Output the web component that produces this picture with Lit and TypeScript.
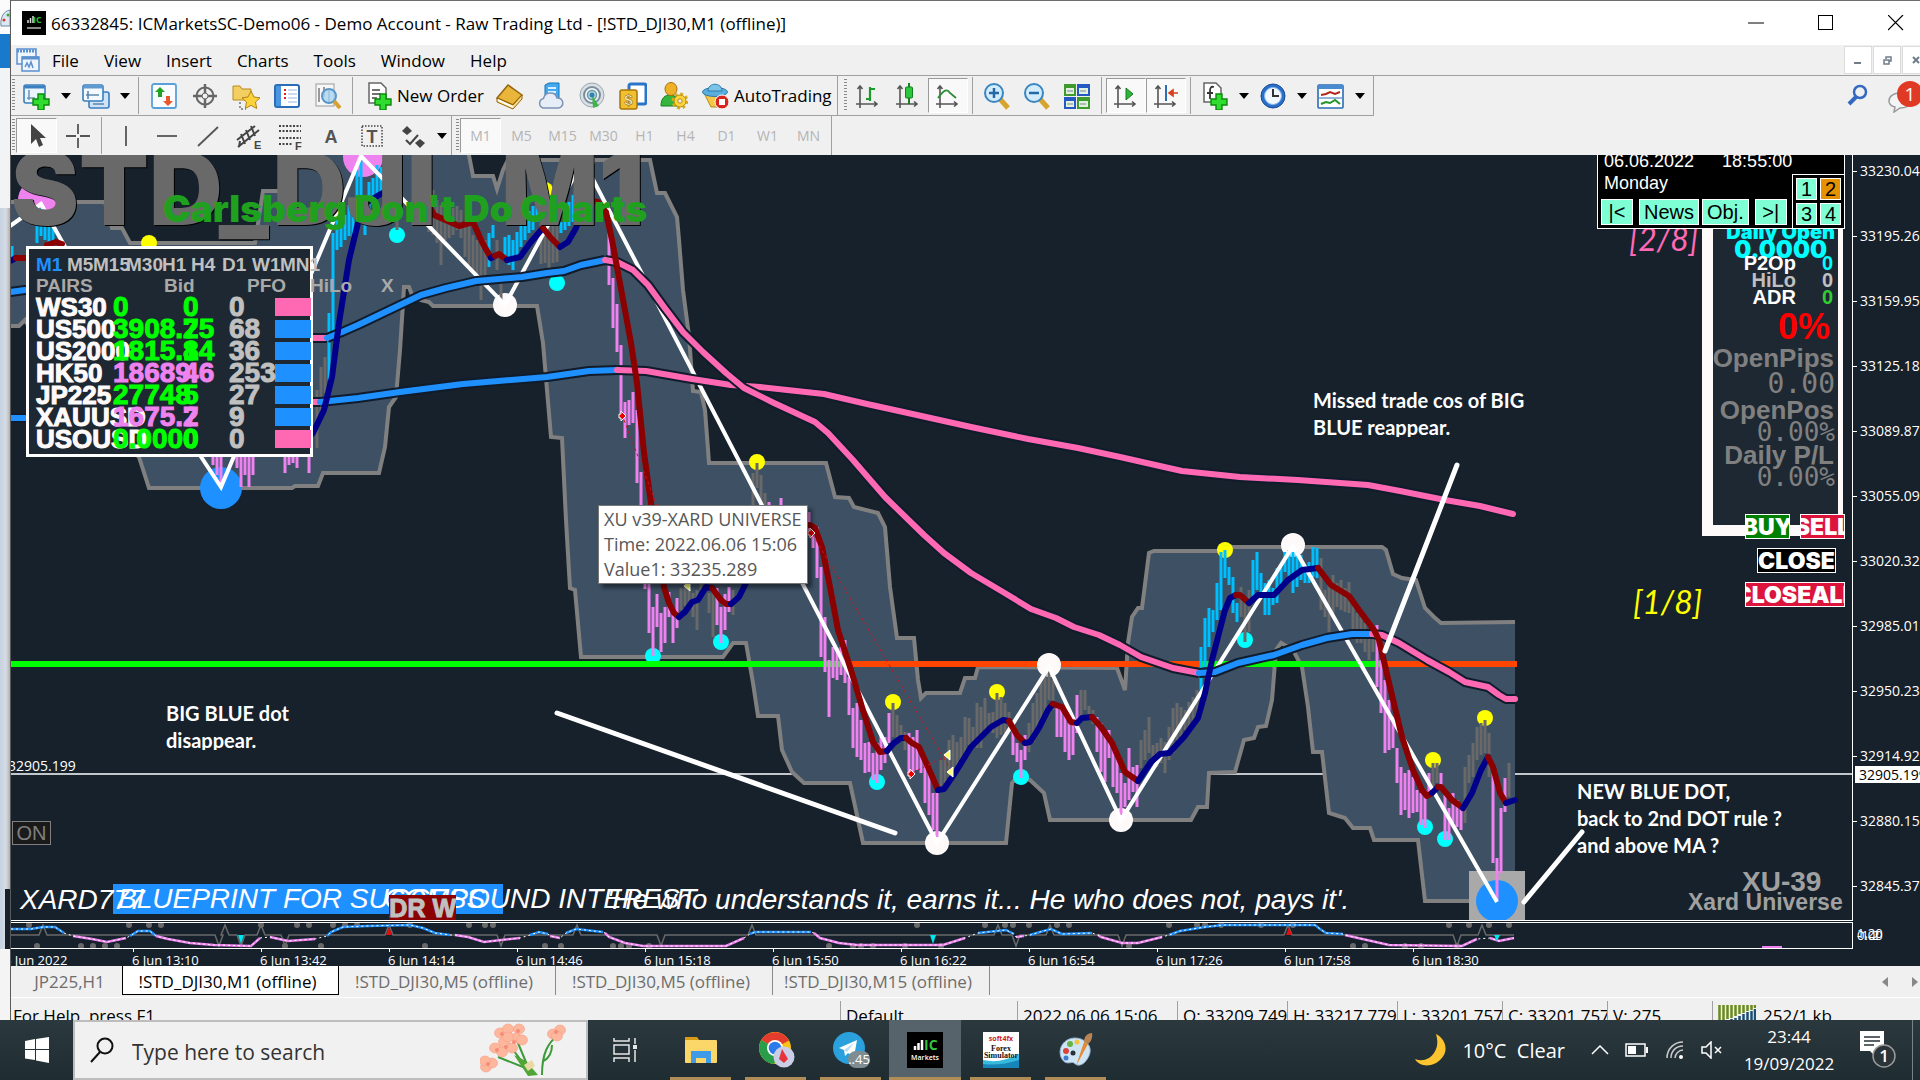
import { LitElement, html, svg, css } from "lit";
import { customElement } from "lit/decorators.js";

type Tone = "v" | "g" | "b";
type Bar = [number, number, Tone?];

const TONES: Record<Tone, string> = { v: "#ee82ee", g: "#696969", b: "#00bfff" };

/* Price bars: first x, then [high, low, tone] every 4 units; tone carries over when omitted. */
const RUNS: Array<[number, Bar[]]> = [
  [12, [[246, 260, "b"]]],
  [37, [[210, 243, "b"], [208, 236], [212, 240], [215, 242], [214, 246]]],
  [213, [[440, 465, "v"], [440, 475], [440, 487]]],
  [237, [[440, 468, "v"], [440, 487], [440, 475], [440, 487], [440, 475]]],
  [285, [[440, 473, "v"], [440, 465], [440, 463], [440, 468]]],
  [309, [[440, 473, "v"]]],
  [317, [[390, 448, "g"], [367, 417], [357, 393], [313, 380, "b"], [233, 340], [220, 250], [228, 247], [215, 240], [205, 236], [200, 237], [170, 230], [157, 223], [195, 235], [182, 222], [178, 205], [165, 197], [167, 197], [160, 198], [155, 220], [155, 213], [190, 230, "g"]]],
  [421, [[177, 200, "g"], [180, 203], [185, 232], [190, 235], [200, 243], [205, 265], [210, 240], [212, 238], [208, 235], [206, 230], [210, 238], [227, 257], [225, 265], [235, 273], [240, 283], [243, 300], [240, 280], [233, 267, "b"], [225, 238], [240, 270, "g"], [277, 300], [237, 260, "b"], [235, 265], [240, 270], [232, 260], [223, 247], [215, 240], [211, 233], [206, 230], [200, 222], [217, 264, "g"], [217, 263], [220, 277], [225, 263], [225, 262], [222, 233, "b"], [212, 230], [202, 226], [195, 222], [182, 215], [180, 210], [176, 205], [170, 200]]],
  [609, [[233, 285, "v"], [278, 328], [304, 352], [345, 413], [402, 438], [400, 425], [392, 423], [410, 483], [472, 560], [520, 589], [530, 633], [607, 656], [594, 627], [613, 652], [607, 643], [592, 617], [613, 643], [598, 628], [588, 610, "g"], [580, 606], [590, 603], [593, 617], [590, 630], [576, 590], [570, 586], [593, 613], [590, 637], [588, 625, "v"], [607, 643], [594, 630], [587, 612], [590, 615, "g"]]],
  [753, [[473, 520, "g"], [463, 488], [475, 520], [493, 520], [502, 520, "v"], [505, 520], [508, 520], [498, 520]]],
  [809, [[512, 530, "v"], [530, 548], [527, 578], [567, 657], [617, 672], [660, 717], [647, 678], [648, 680], [647, 675], [640, 683], [677, 715], [708, 748], [703, 757], [720, 760], [743, 773], [742, 772], [753, 780], [743, 783], [733, 770], [737, 763], [713, 743], [703, 737, "g"], [715, 738], [725, 740], [732, 750], [733, 773, "v"], [737, 773], [730, 770], [750, 773], [757, 803], [773, 815], [793, 830], [793, 837], [760, 790, "g"], [753, 783], [740, 777], [735, 777], [742, 767], [737, 760], [717, 757], [718, 745], [727, 747], [703, 748], [707, 748], [698, 733], [713, 730], [712, 733], [693, 738], [697, 735], [703, 733], [712, 730], [727, 755, "v"], [743, 762], [750, 778], [735, 760], [723, 752, "g"], [703, 742], [693, 733], [680, 727], [673, 720], [670, 700], [680, 710], [707, 737, "v"], [708, 737], [707, 752], [723, 760], [720, 755], [695, 733], [690, 720, "g"], [690, 710], [706, 720], [710, 724], [717, 752, "v"], [723, 772], [733, 782], [730, 758], [743, 787], [757, 793], [773, 815], [783, 807], [748, 800], [767, 792], [765, 807], [740, 768, "g"], [730, 760], [717, 753], [745, 763], [743, 767], [738, 763], [742, 773], [727, 760], [708, 753], [703, 740], [707, 737], [710, 730], [702, 728], [697, 727], [690, 720], [647, 690, "b"], [618, 667], [608, 647], [610, 632], [583, 620], [552, 610], [550, 578], [567, 585], [577, 613], [603, 622], [587, 617, "g"], [603, 642], [590, 632], [560, 597, "b"], [552, 590], [573, 597], [583, 615], [580, 615], [588, 605], [568, 603], [567, 590], [552, 572], [550, 577], [552, 593], [553, 587], [555, 580], [565, 583], [562, 583], [547, 577], [548, 578], [558, 610, "g"], [590, 617], [580, 632], [575, 613], [583, 607], [580, 610], [588, 612], [582, 613], [600, 637], [613, 643], [617, 643], [623, 652], [633, 660], [625, 652], [625, 687, "v"], [660, 713], [680, 753], [700, 750], [717, 748], [748, 783], [767, 815], [773, 810], [770, 818], [777, 813], [790, 812], [793, 825], [790, 828], [773, 795], [763, 790, "g"], [763, 783], [773, 787, "v"], [790, 840], [808, 840], [793, 823], [800, 827], [803, 830], [767, 823, "g"], [755, 783], [743, 777], [727, 760], [723, 755], [720, 753], [733, 777], [773, 863, "v"], [858, 900], [808, 873], [778, 812], [763, 797, "g"]]],
];

const UPPER =
  "10,202 105,202 112,228 122,228 130,243 255,243 263,191 280,191 287,158 290,145 467,145 473,176 493,176 497,189 503,170 508,160 650,160 657,193 665,193 677,217 679,240 683,290 689,336 693,391 701,392 705,410 709,463 826,463 835,497 849,498 854,507 878,513 885,527 890,587 897,638 914,638 918,680 921,698 926,693 960,693 965,678 975,678 978,667 1117,668 1125,690 1128,643 1132,617 1138,608 1142,608 1149,553 1154,551 1224,551 1231,547 1382,547 1386,550 1393,574 1402,578 1416,580 1425,608 1434,617 1441,623 1515,622";
const LOWER =
  "10,326 19,326 25,320 60,380 139,457 149,488 292,488 295,486 318,486 323,473 379,473 385,447 389,407 396,397 400,350 404,287 409,287 412,295 421,300 429,302 433,306 537,306 543,343 551,437 562,438 566,520 570,588 575,590 581,657 723,657 733,643 746,643 753,683 758,716 778,716 782,750 792,772 804,783 850,783 863,843 1006,843 1012,783 1018,776 1030,780 1044,793 1050,820 1191,820 1198,807 1207,807 1209,773 1235,772 1244,740 1254,738 1258,727 1266,726 1272,700 1276,650 1281,643 1293,650 1302,667 1308,707 1313,752 1322,752 1329,813 1345,818 1353,828 1370,828 1374,840 1418,840 1425,901 1515,901";

/* Moving averages, as coloured segments. */
const SLOW: Array<[string, string]> = [
  ["#1e90ff", "10,292 25,290 60,290"],
  ["#ff69b4", "300,338 327,338"],
  ["#1e90ff", "327,338 342,332 358,325 379,315 421,295 446,288 476,281 522,277 547,273 564,271 581,265 605,260"],
  ["#ff69b4", "605,260 617,262 633,270 648,285 664,307 683,332 703,352 726,373 744,388 774,403 815,422 828,433 853,460 885,497 924,535 944,553 971,573 1003,592 1031,609 1056,618 1074,627 1099,635 1120,645 1141,657 1173,668 1199,673"],
  ["#1e90ff", "1199,673 1215,672 1238,663 1274,655 1302,645 1327,638 1352,634 1372,634"],
  ["#ff69b4", "1372,634 1382,635 1399,643 1427,660 1449,672 1465,682 1488,687 1499,695 1506,699 1515,699"],
];
const SLOWEST: Array<[string, string]> = [
  ["#1e90ff", "10,418 60,418"],
  ["#ff69b4", "300,402 320,402"],
  ["#1e90ff", "320,402 358,398 400,392 463,384 547,377 589,371 617,370"],
  ["#ff69b4", "617,370 646,371 692,379 731,385 760,387 824,394 867,404 917,415 971,427 1028,439 1078,448 1120,457 1182,471 1240,477 1298,480 1368,485 1400,491 1445,500 1480,506 1513,514"],
];
const NAVY = "#00008b";
const MAROON = "#8b0000";
const FAST: Array<[string, string]> = [
  [NAVY, "10,261 16,258"],
  [MAROON, "16,258 25,258"],
  [MAROON, "47,245 56,242 62,244"],
  [NAVY, "300,445 313,433 324,410 332,377 339,323 349,260 358,223 366,203 379,195 395,187"],
  [MAROON, "418,194 425,198 434,215 459,226 473,222 482,242 491,258"],
  [NAVY, "491,258 495,256"],
  [MAROON, "495,256 499,254 507,260"],
  [NAVY, "507,260 520,257 530,243 543,228"],
  [MAROON, "543,228 551,238 560,247"],
  [NAVY, "560,247 568,242 576,228 583,208"],
  [MAROON, "583,204 590,201 598,202 606,212 612,240 631,343 637,383 644,453 651,503 664,587 669,603 674,613 679,617"],
  [NAVY, "679,617 685,612 692,602 698,600 706,587 712,588"],
  [MAROON, "712,588 721,600 726,604 731,604"],
  [NAVY, "731,604 739,597 746,583 775,545 800,530"],
  [MAROON, "800,526 810,525 815,528 822,547 830,587 838,630 851,670 862,707 873,742 880,752 887,751"],
  [NAVY, "887,751 894,743 901,738 906,738"],
  [MAROON, "906,738 912,743 919,747 928,767 938,790"],
  [NAVY, "938,790 944,789 955,773 971,747 991,727 1003,720 1009,721"],
  [MAROON, "1009,721 1017,735 1025,743"],
  [NAVY, "1025,743 1030,742 1039,728 1048,710 1053,704"],
  [MAROON, "1053,704 1062,707 1071,722 1077,723"],
  [NAVY, "1077,723 1082,718 1092,717"],
  [MAROON, "1092,717 1101,727 1112,743 1125,772 1138,781"],
  [NAVY, "1138,781 1151,762 1160,754 1169,753 1184,737 1198,718 1205,693 1212,660 1225,610 1230,598 1236,595"],
  [MAROON, "1236,595 1240,595 1249,603"],
  [NAVY, "1249,603 1258,595 1274,595 1288,580 1302,570 1318,568"],
  [MAROON, "1318,568 1331,585 1349,596 1359,610 1374,630 1379,640 1390,687 1402,737 1413,770 1422,790 1427,796 1432,793"],
  [NAVY, "1432,793 1438,787"],
  [MAROON, "1438,787 1441,787 1452,800 1463,808"],
  [NAVY, "1463,808 1472,793 1481,770 1488,757"],
  [MAROON, "1488,757 1493,767 1500,793 1506,803"],
  [NAVY, "1506,803 1515,800"],
];

const DOTS: Array<[string, number, Array<[number, number]>]> = [
  ["#ffff00", 8, [[149, 243], [394, 155], [545, 190], [757, 462], [893, 702], [997, 692], [1225, 550], [1433, 760], [1485, 718]]],
  ["#00ffff", 8, [[397, 235], [557, 283], [653, 656], [721, 642], [877, 782], [1021, 777], [1245, 640], [1425, 827], [1445, 839]]],
  ["#ee82ee", 20, [[38, 200], [363, 157]]],
  ["#1e90ff", 21, [[221, 488], [1497, 901]]],
  ["#fffafa", 12, [[505, 305], [583, 160], [937, 843], [1121, 820], [1293, 545]]],
];

const WAVE: Array<[string, string]> = [
  ["b", "11,929 31,929 43,927 55,927 64,933"],
  ["v", "73,936 92,939 107,942 126,938"],
  ["b", "130,936 138,931 150,931 156,936"],
  ["v", "156,936 168,939 190,943 214,945 251,946 260,938"],
  ["v", "270,937 288,941 315,939"],
  ["b", "327,936 331,932 343,927 367,926 410,925 423,928 435,933 450,935"],
  ["v", "455,935 468,937 484,942 520,938"],
  ["b", "530,935 539,932 548,934"],
  ["v", "550,936 560,938"],
  ["b", "566,933 576,929 603,932"],
  ["v", "605,933 609,937 625,943 643,946 726,946 744,938"],
  ["b", "750,934 755,932 811,932"],
  ["v", "814,933 820,938 839,943 857,945 943,945 965,938"],
  ["b", "978,933 1006,930 1014,934"],
  ["v", "1016,937 1024,936"],
  ["b", "1030,935 1040,932 1051,929 1062,934 1092,933"],
  ["v", "1098,935 1101,937 1122,943 1138,943 1162,937"],
  ["b", "1169,935 1180,931 1205,927 1223,925 1315,925 1320,929 1326,933 1343,934"],
  ["v", "1345,935 1358,938 1389,945 1462,946 1477,939"],
  ["v", "1490,938 1499,941 1514,938"],
];
const WAVE_DOTS_TOP = [29, 129, 149, 161, 261, 297, 309, 333, 345, 357, 410, 469, 485, 493, 917, 985, 1005, 1013, 1029, 1057, 1069, 1169, 1197, 1205, 1221, 1261, 1293, 1449, 1469, 1489, 1509];
const WAVE_DOTS_BOTTOM = [37, 81, 93, 105, 117, 285, 321, 425, 545, 561, 613, 621, 629, 649, 829, 853, 861, 873, 905, 941, 1129, 1353, 1365, 1405, 1421, 1457];

const PRICES = ["33230.040", "33195.260", "33159.950", "33125.180", "33089.870", "33055.090", "33020.320", "32985.010", "32950.230", "32914.920", "32880.150", "32845.370"];
const TIMES = ["6 Jun 13:10", "6 Jun 13:42", "6 Jun 14:14", "6 Jun 14:46", "6 Jun 15:18", "6 Jun 15:50", "6 Jun 16:22", "6 Jun 16:54", "6 Jun 17:26", "6 Jun 17:58", "6 Jun 18:30"];
const PAIRS: Array<[string, string, string, string, string, string]> = [
  ["WS30", "0", "0", "0", "lime", "down"],
  ["US500", "3908.25", "7", "68", "lime", "up"],
  ["US2000", "1815.84", "1", "36", "lime", "up"],
  ["HK50", "18689.6", "4", "253", "violet", "up"],
  ["JP225", "27748", "5", "27", "lime", "up"],
  ["XAUUSD", "1675.7", "2", "9", "violet", "up"],
  ["USOUSD", "0.0000", "0", "0", "lime", "down"],
];

/* ---------- toolbar glyphs ---------- */
const plus = svg`<path d="M15 12h6v5h5v6h-5v5h-6v-5h-5v-6h5z" fill="#2fdc2f" stroke="#0a8a0a" stroke-width="1.4"/>`;
const axes = svg`<path d="M6 4v22M2 22h21M3.500 7L6 4l2.500 3M20 19.500l3 2.500-3 2.500" fill="none" stroke="#555" stroke-width="1.600"/>`;
const ICONS: Record<string, unknown> = {
  newChart: svg`<rect x="1" y="3" width="21" height="18" rx="2" fill="#eaf4fd" stroke="#3a7fbf" stroke-width="1.6"/><path d="M1.500 5h20" stroke="#3a7fbf" stroke-width="3"/><path d="M6 8v10M4 16h8" stroke="#6b93b8" stroke-width="1.500"/>${plus}`,
  profiles: svg`<rect x="7" y="10" width="20" height="16" rx="2" fill="#cfe3f6" stroke="#3a7fbf" stroke-width="1.600"/><rect x="1" y="3" width="20" height="16" rx="2" fill="#f3f9ff" stroke="#3a7fbf" stroke-width="1.600"/><path d="M1.500 5h19" stroke="#5e9bd0" stroke-width="3"/><path d="M6 9v8M4 13h13M11 22h11" stroke="#5d86ad" stroke-width="1.600"/>`,
  market: svg`<rect x="2" y="2" width="24" height="24" rx="2" fill="#f8fcff" stroke="#5aa0d8" stroke-width="1.800"/><path d="M10 5l5 5h-3v5H8v-5H5z" fill="#21a321"/><path d="M18 24l5-5h-3v-5h-4v5h-3z" fill="#e8562a"/>`,
  target: svg`<circle cx="14" cy="14" r="8.500" fill="none" stroke="#666" stroke-width="2"/><path d="M14 2v24M2 14h24" stroke="#666" stroke-width="2.500"/><circle cx="14" cy="14" r="3" fill="#efefef" stroke="#666"/>`,
  folder: svg`<path d="M1 4h7l2 3h9v11H1z" fill="#f3cf62" stroke="#b98a1d"/><path d="M8 20v7h6" fill="none" stroke="#333" stroke-dasharray="2 2"/><path d="M19 9l3 6 6 .8-4.500 4.200 1.200 6.500L19 23.400l-5.700 3.100 1.200-6.500L10 15.800l6-.8z" fill="#fbd23c" stroke="#b58210"/>`,
  navigator: svg`<rect x="2" y="3" width="24" height="22" rx="2" fill="#fff" stroke="#2a6cb5" stroke-width="2"/><rect x="3" y="4" width="5" height="20" fill="#4b94df"/><path d="M11 8h2M11 12h2M11 16h2" stroke="#d22" stroke-width="2"/><path d="M15 8h9M15 12h9M15 16h9M15 20h9" stroke="#9ab9d9"/>`,
  tester: svg`<rect x="2" y="2" width="18" height="22" fill="#f7f7f7" stroke="#999"/><path d="M5 6v14M10 5v10M15 8v12" stroke="#999" stroke-width="2"/><circle cx="15" cy="14" r="7" fill="#a9d4f2" fill-opacity=".8" stroke="#5a97c9" stroke-width="2"/><path d="M20 19l6 7" stroke="#d6a02d" stroke-width="4"/>`,
  order: svg`<path d="M4 1h12l5 5v15H4z" fill="#fff" stroke="#666" stroke-width="1.500"/><path d="M7 8h8M7 12h9M7 16h5" stroke="#444" stroke-width="1.600"/>${plus}`,
  book: svg`<path d="M1 16L12 3l14 10-9 10z" fill="#e9b53a" stroke="#94650a" stroke-width="1.500"/><path d="M1 16v4l16 7 9-10v-4l-9 10z" fill="#f6dc8c" stroke="#94650a"/><path d="M2 18l15 7" stroke="#fff" stroke-width="1.500"/>`,
  cloud: svg`<path d="M8 3l4-2h10v15H8z" fill="#43aaf0" stroke="#1374bd"/><path d="M11 6h8M11 10h8" stroke="#d7efff" stroke-width="2"/><path d="M6 26a5 5 0 01.5-9.600A7 7 0 0120 16a5 5 0 011.500 10z" fill="#e6edf7" stroke="#7d93b5" stroke-width="1.500"/>`,
  signal: svg`<circle cx="14" cy="13" r="12" fill="#d9dfe4" stroke="#9aa7b0"/><circle cx="14" cy="13" r="8" fill="#edf3f6" stroke="#7c8e9a" stroke-width="2"/><circle cx="14" cy="13" r="4.500" fill="#b9e0c0" stroke="#6a97b4" stroke-width="1.500"/><path d="M14 13l7 11-6 2z" fill="#3eb549"/><circle cx="14" cy="13" r="2.500" fill="#2f7ec0"/>`,
  money: svg`<rect x="10" y="2" width="17" height="20" rx="2" fill="#fff" stroke="#2a74cc" stroke-width="3"/><rect x="1" y="8" width="17" height="19" rx="2" fill="#f1c02f" stroke="#a87508" stroke-width="1.500"/><text x="9.500" y="23" font-size="15" font-weight="700" text-anchor="middle" fill="#fff8d8" stroke="#8a5d00" stroke-width=".5">$</text>`,
  expert: svg`<path d="M1 24c0-8 4-11 9-11s9 3 9 11z" fill="#35b53c" stroke="#15801c"/><ellipse cx="11" cy="7" rx="6" ry="6.500" fill="#efb128" stroke="#a97009"/><circle cx="20" cy="19" r="7" fill="none" stroke="#d9ae1c" stroke-width="3" stroke-dasharray="2.800 2.700"/><circle cx="20" cy="19" r="6" fill="#fbd43c" stroke="#b88a10"/><circle cx="20" cy="19" r="2.200" fill="#efefef" stroke="#b88a10"/>`,
  auto: svg`<path d="M2 11h21l-5 14h-9z" fill="#f4c844" stroke="#b58817"/><ellipse cx="13" cy="10" rx="12.500" ry="4.500" fill="#5aaede" stroke="#2c7bab"/><path d="M6 9c0-9 14-9 14 0z" fill="#7cc3ea" stroke="#2c7bab"/><circle cx="20" cy="20" r="7" fill="#d9241c" stroke="#fff"/><rect x="17" y="17" width="6" height="6" fill="#fff"/>`,
  bars: svg`${axes}<path d="M16 5v14M12 17h4M16 7h5" stroke="#1d9b2a" stroke-width="2.200"/>`,
  candles: svg`${axes}<path d="M15 1v21" stroke="#168021" stroke-width="2"/><rect x="11.500" y="5" width="7" height="11" rx="1" fill="#2bc63b" stroke="#168021"/>`,
  line: svg`${axes}<path d="M4 16c6-8 9-10 12-5l6 5" fill="none" stroke="#2e8b35" stroke-width="1.800"/>`,
  zoomIn: svg`<path d="M17 17l8 9" stroke="#d6a52e" stroke-width="5"/><circle cx="11" cy="11" r="9" fill="#d3ecfb" stroke="#3a86c2" stroke-width="2"/><path d="M6 11h10M11 6v10" stroke="#2568a8" stroke-width="2.500"/>`,
  zoomOut: svg`<path d="M17 17l8 9" stroke="#d6a52e" stroke-width="5"/><circle cx="11" cy="11" r="9" fill="#d3ecfb" stroke="#3a86c2" stroke-width="2"/><path d="M6 11h10" stroke="#2568a8" stroke-width="2.500"/>`,
  tile: svg`<rect x="1" y="2" width="12" height="12" fill="#3d9a2c"/><rect x="14" y="2" width="13" height="12" fill="#2459c4"/><rect x="1" y="15" width="12" height="12" fill="#2459c4"/><rect x="14" y="15" width="13" height="12" fill="#3d9a2c"/><path d="M3 6h8v6H3zM16 6h9v6h-9zM3 19h8v6H3zM16 19h9v6h-9z" fill="#e2f0dd"/><path d="M4 9h6M17 9h6M4 22h6M17 22h6" stroke="#789"/>`,
  scroll: svg`${axes}<path d="M14 6l7 6-7 6z" fill="#2db53a" stroke="#177c21"/>`,
  shift: svg`${axes}<path d="M14 3v16" stroke="#2a6fb4" stroke-width="2"/><path d="M26 11h-6M21 8l-4 3 4 3z" fill="#d9401e" stroke="#d9401e" stroke-width="1.600"/>`,
  indicators: svg`<path d="M3 1h12l5 5v14H3z" fill="#fff" stroke="#666" stroke-width="1.500"/><path d="M13 5c-3-1-4 1-4 4v8M6 11h6" fill="none" stroke="#333" stroke-width="1.800"/>${plus}`,
  clock: svg`<circle cx="14" cy="14" r="12" fill="#2b6fca" stroke="#174a93"/><circle cx="14" cy="14" r="8.500" fill="#f2f8ff" stroke="#8ab8ec"/><path d="M14 7v7h6" fill="none" stroke="#333" stroke-width="2"/>`,
  template: svg`<rect x="1" y="3" width="25" height="23" rx="1" fill="#fff" stroke="#2a6cb5" stroke-width="1.600"/><path d="M1 5h25" stroke="#4a8ad0" stroke-width="4"/><path d="M4 13l5-1 4-2 5 2 5-2" fill="none" stroke="#b2261d" stroke-width="2"/><path d="M2 16h23" stroke="#2a6cb5"/><path d="M4 22l5-2 4 1 5-3 5 4" fill="none" stroke="#22942d" stroke-width="2"/>`,
  cursor: svg`<path d="M8 2v20l5-5 3 8 4-2-3-7h6z" fill="#444"/>`,
  cross: svg`<path d="M14 2v10M14 16v10M2 14h10M16 14h10" stroke="#555" stroke-width="1.800"/>`,
  vline: svg`<path d="M14 4v20" stroke="#555" stroke-width="1.800"/>`,
  hline: svg`<path d="M4 14h20" stroke="#555" stroke-width="1.800"/>`,
  trend: svg`<path d="M4 24L24 5" stroke="#555" stroke-width="1.800"/>`,
  channel: svg`<path d="M2 18L20 4M3 25L24 8M6 12l4 10M11 8l4 10M16 4l4 10M5 19l-1 6" stroke="#444" stroke-width="2"/><text x="19" y="27" font-size="11" font-weight="700" fill="#444">E</text>`,
  fibo: svg`<path d="M3 4h22M3 9h22M3 16h22M3 22h14" stroke="#444" stroke-width="2" stroke-dasharray="2 1.500"/><text x="19" y="28" font-size="11" font-weight="700" fill="#444">F</text>`,
  text: svg`<text x="14" y="21" text-anchor="middle" font-size="18" font-weight="700" fill="#555">A</text>`,
  label: svg`<rect x="4" y="4" width="20" height="20" fill="none" stroke="#444" stroke-width="1.500" stroke-dasharray="1.500 1.500"/><text x="14" y="21" text-anchor="middle" font-size="18" font-weight="700" fill="#555">T</text>`,
  arrows: svg`<path d="M8 4l5 5-5 4-5-4z" fill="#444"/><path d="M7 18l4 4 8-9" fill="none" stroke="#444" stroke-width="2"/><path d="M21 17l5 4-5 5-5-5z" fill="#444"/>`,
};

const icon = (name: string) => html`<svg class="icon" viewBox="0 0 28 28" aria-hidden="true">${ICONS[name]}</svg>`;
const tool = (name: string, label: string, extra = "") => html`<button class="tool ${extra}" aria-label=${label}>${icon(name)}</button>`;
const caret = (label: string) => html`<button class="caret" aria-label=${label}><svg viewBox="0 0 10 6" aria-hidden="true"><path d="M0 0h10L5 6z"/></svg></button>`;
const sep = html`<span class="sep"></span>`;
const grip = html`<span class="grip"></span>`;

@customElement("trade-chart")
export class TradeChart extends LitElement {
  static styles = css`
    :host { display: grid; grid-template-columns: minmax(0, 1fr) 67px; grid-template-rows: minmax(0, 1fr) 28px 17px; flex: 1; min-height: 0; background: #16212c; color: #fff; overflow: hidden; font-family: "Open Sans", "Noto Sans", sans-serif; }
    button { font: inherit; padding: 0; margin: 0; cursor: pointer; }
    .stage { position: relative; overflow: hidden; border-right: 1px solid #fff; border-bottom: 1px solid #fff; }
    .plot { display: block; width: 100%; height: 100%; }
    .arial { font-family: "Liberation Sans", Arial, sans-serif; }
    .black { font-family: Inter, "Liberation Sans", sans-serif; font-weight: 900; }
    .note { font-family: Lato, "Open Sans", sans-serif; font-weight: 700; font-size: 20px; fill: #fff; }
    .motto { font-family: "Liberation Sans", Arial, sans-serif; font-style: italic; font-size: 28px; fill: #fff; }
    .murrey { font-family: Lato, sans-serif; font-style: italic; font-size: 32px; }
    .prices { overflow: hidden; padding-top: 8px; position: relative; }
    .price { display: block; height: 65px; line-height: 16px; font-size: 14px; padding-left: 7px; white-space: nowrap; position: relative; }
    .price::before { content: ""; position: absolute; left: 0; top: 8px; width: 4px; border-top: 1px solid #fff; }
    .now { position: absolute; left: 2px; right: 0; top: 611px; height: 17px; line-height: 17px; padding-left: 4px; background: #fff; color: #000; font-size: 14px; }
    .wave { border: 1px solid #fff; border-left: 0; margin-top: 1px; overflow: hidden; }
    .levels { display: grid; font-size: 13px; line-height: 24px; padding-left: 4px; }
    .levels span { grid-area: 1 / 1; }
    .levels span + span { line-height: 28px; }
    .times { display: flex; grid-column: 1 / 3; font-size: 13px; line-height: 22px; overflow: hidden; white-space: nowrap; }
    .time { flex: 0 0 128px; position: relative; }
    .time:first-child { flex-basis: 121px; text-indent: -7px; }
    .time + .time::before { content: ""; position: absolute; left: 1px; top: 0; height: 3px; border-left: 1px solid #fff; }

    .pairs { position: absolute; left: 15px; top: 91px; width: 287px; height: 211px; box-sizing: border-box; border: 3px solid #fff; background: #1e2832; font-family: "Liberation Sans Narrow", "Liberation Sans", sans-serif; font-weight: 700; padding: 5px 0 0 7px; white-space: nowrap; }
    .frames { display: grid; grid-template-columns: 31px 26px 33px 36px 29px 31px 30px 28px 30px; font-size: 19px; line-height: 22px; color: #c0c0c0; }
    .frames b:first-child { color: #1e90ff; }
    .pairs table { border-collapse: collapse; table-layout: fixed; width: 274px; font-size: 28px; -webkit-text-stroke: 1px currentColor; }
    .pairs td { padding: 0; height: 22px; line-height: 22px; overflow: visible; }
    .pairs td:first-child { font-size: 26px; color: #fffafa; }
    .heads { display: grid; grid-template-columns: 128px 83px 63px 71px 20px; font-size: 19px; line-height: 20px; color: #a9a9a9; }
    .c1 { width: 77px; } .c2 { width: 70px; } .c3 { width: 46px; } .c4 { width: 46px; } .c5 { width: 35px; }
    .pairs td.gray { color: #c0c0c0; }
    .lime { color: #00ff00; } .violet { color: #ee82ee; }
    .swatch { height: 18px; width: 36px; }
    .up { background: #1e90ff; } .down { background: #ff69b4; }

    .tip { position: absolute; left: 587px; top: 350px; background: #fff; border: 1px solid #767676; color: #575757; font-size: 18px; line-height: 25px; padding: 1px 5px; box-shadow: 4px 4px 4px rgba(0, 0, 0, 0.45); white-space: nowrap; }
    .watch { position: absolute; right: 7px; top: -2px; width: 248px; height: 76px; box-sizing: border-box; border: 1px solid #fff; background: #000; font-family: "Liberation Sans", sans-serif; font-size: 18px; line-height: 22px; padding: 0 0 0 6px; white-space: nowrap; }
    .watch .row { display: flex; gap: 28px; height: 18px; line-height: 14px; }
    .keys { display: flex; gap: 3px; margin: 5px 0 0 -3px; }
    .key { background: #7fffd4; border: 1px solid #fff; color: #000; font-size: 20px; line-height: 22px; height: 26px; padding: 0 4px; min-width: 32px; }
    .keys .key:nth-child(2), .keys .key:nth-child(4) { margin-left: 3px; }
    .quad { position: absolute; right: -1px; bottom: -1px; border: 1px solid #fff; background: #000; display: grid; grid-template-columns: 21px 21px; gap: 3px; padding: 3px; }
    .quad .key { min-width: 0; padding: 0; height: 22px; line-height: 20px; }
    .quad .on { background: #e69100; }

    .stats { position: absolute; right: 9px; top: 40px; width: 141px; height: 341px; box-sizing: border-box; border: solid #fffafa; border-width: 0 5px 11px 11px; background: #1e2832; font-family: "Liberation Sans", sans-serif; font-weight: 700; display: flex; flex-direction: column; align-items: flex-end; padding: 27px 3px 0 0; color: #808080; white-space: nowrap; }
    .daily { font-family: Inter, sans-serif; font-weight: 900; font-size: 20px; line-height: 20px; color: #0ff; }
    .open { font-family: Inter, sans-serif; font-weight: 900; font-size: 24px; line-height: 16px; height: 13px; color: #0ff; padding-right: 8px; }
    .stat { display: flex; gap: 26px; font-size: 20px; line-height: 17px; color: #c0c0c0; padding-right: 2px; }
    .stat.w { color: #fff; }
    .stat i { font-style: normal; }
    .cy { color: #0ff; } .gr { color: #32cd32; }
    .pct { color: #f00; font-size: 36px; line-height: 42px; padding-right: 5px; }
    .big { font-size: 26px; line-height: 20px; padding-right: 1px; }
    .lcd { font-family: "DejaVu Sans Mono", monospace; font-weight: 400; font-size: 28px; line-height: 32px; }
    .lcd.s { font-size: 26px; line-height: 25px; }
    .trade { position: absolute; box-sizing: border-box; height: 25px; border: 1px solid #fff; color: #fff; display: flex; justify-content: center; align-items: center; overflow: hidden; font-family: Inter, sans-serif; font-weight: 900; font-size: 23px; }
    .buy { right: 62px; top: 359px; width: 45px; background: #008000; }
    .sell { right: 7px; top: 359px; width: 45px; background: #dc143c; }
    .close { right: 16px; top: 393px; width: 79px; background: #000; }
    .all { right: 7px; top: 427px; width: 100px; background: #dc143c; }
    .on-btn { position: absolute; left: 1px; top: 666px; width: 39px; height: 24px; box-sizing: border-box; border: 1px solid #808080; background: #1a1a1a; color: #808080; font-family: "Liberation Sans", sans-serif; font-size: 20px; line-height: 22px; }
    .badge { position: absolute; left: 378px; top: 740px; width: 67px; height: 25px; background: #8b0000; color: #c0c0c0; overflow: hidden; font-family: "Liberation Sans Narrow", "Liberation Sans", sans-serif; font-weight: 700; font-size: 25px; line-height: 26px; display: flex; justify-content: flex-end; white-space: nowrap; -webkit-text-stroke: 1px currentColor; }
  `;

  private bars() {
    const groups: Record<Tone, string[]> = { v: [], g: [], b: [] };
    for (const [start, run] of RUNS) {
      let tone: Tone = "v";
      run.forEach(([hi, lo, t], i) => {
        tone = t ?? tone;
        groups[tone].push(`M${start + i * 4} ${hi}V${lo}`);
      });
    }
    return (Object.keys(groups) as Tone[]).map((t) => svg`<path d=${groups[t].join("")} stroke=${TONES[t]} stroke-width="3" fill="none"/>`);
  }

  private average(parts: Array<[string, string]>, width: number, halo = false) {
    return svg`
      ${halo ? parts.map(([, p]) => svg`<polyline points=${p} fill="none" stroke="#101c2c" stroke-width=${width + 4} stroke-linejoin="round"/>`) : ""}
      ${parts.map(([c, p]) => svg`<polyline points=${p} fill="none" stroke=${c} stroke-width=${width} stroke-linejoin="round" stroke-linecap="round"/>`)}`;
  }

  private plot() {
    const closed = `${UPPER} ${LOWER.split(" ").reverse().join(" ")}`;
    return html`<svg class="plot" viewBox="11 155 1841 765" preserveAspectRatio="xMinYMin slice" role="img" aria-label="STD_DJI30 one minute chart">
      <path d="M10 774H1852" stroke="#fff" stroke-width="1.500"/>
      <polygon points=${closed} fill="#3d5064"/>
      <polyline points=${UPPER} fill="none" stroke="#808080" stroke-width="4"/>
      <polyline points=${LOWER} fill="none" stroke="#808080" stroke-width="4"/>
      <rect x="1469" y="871" width="56" height="52" fill="#a9a9a9"/>
      ${DOTS.map(([c, r, pts]) => pts.map(([x, y]) => svg`<circle cx=${x} cy=${y} r=${r} fill=${c}/>`))}
      <g stroke-width="6" fill="none">
        <path d="M10 664H848M1202 664H1381" stroke="#00ff00"/>
        <path d="M848 664H1202M1381 664H1517" stroke="#ff4500"/>
      </g>
      <circle cx="1049" cy="665" r="12" fill="#fffafa"/>
      ${this.bars()}
      <polyline points="10,226 41,204 78,270 221,487 361,156 505,305 583,160 937,843 1049,667 1121,820 1293,546 1497,902" fill="none" stroke="#fff" stroke-width="4"/>
      ${this.average(SLOWEST, 6, true)}
      ${this.average(SLOW, 6, true)}
      ${this.average(FAST, 6)}
      <path d="M624 420L688 586M813 535L952 772M912 773L948 755" stroke="#c8141e" stroke-width="1" stroke-dasharray="3 3" fill="none"/>
      ${[[622, 416], [811, 533], [911, 774]].map(([x, y]) => svg`<path d="M${x - 3} ${y - 2}h2v-3l5 5-5 5v-3h-2z" fill="#e00" stroke="#fff"/>`)}
      ${[[688, 586], [948, 755], [951, 772]].map(([x, y]) => svg`<path d="M${x - 4} ${y}l6-5v10z" fill="#ff6" stroke="#fff"/>`)}
      <g stroke="#fff" stroke-width="5" stroke-linecap="round">
        <path d="M557 713L895 833M1457 465L1385 651M1582 832L1524 902"/>
      </g>
      <g class="black" font-size="102">
        <text x="12" y="226" fill="#000">STD_DJI <tspan x="502">M1</tspan></text>
        <text x="11" y="225" fill="#696969">STD_DJI <tspan x="501">M1</tspan></text>
      </g>
      <text class="black" x="163" y="222" font-size="37" fill="#1fa01f">Carlsberg Don't Do Charts</text>
      <g class="note">
        <text x="1313" y="408">Missed trade cos of BIG</text>
        <text x="1313" y="435">BLUE reappear.</text>
        <text x="166" y="721">BIG BLUE dot</text>
        <text x="166" y="748">disappear.</text>
        <text x="1577" y="799">NEW BLUE DOT,</text>
        <text x="1577" y="826">back to 2nd DOT rule ?</text>
        <text x="1577" y="853">and above MA ?</text>
      </g>
      <path d="M1313 437h144v6h-144zM166 750h100v6h-100z" fill="#16212c"/>
      <text x="8" y="771" font-size="14" fill="#fff">32905.199</text>
      <rect x="113" y="884" width="390" height="30" fill="#1e90ff"/>
      <g class="motto">
        <text x="20" y="909">XARD777</text>
        <text x="118" y="908">BLUEPRINT FOR SUCCESS</text>
        <text x="384" y="908">COMPOUND INTEREST</text>
        <text x="607" y="909">'He who understands it, earns it... He who does not, pays it'.</text>
      </g>
      <text class="murrey" x="1629" y="251" fill="#ff69b4">[2/8]</text>
      <text class="murrey" x="1633" y="614" fill="#ffff00">[1/8]</text>
      <g class="arial" font-weight="700" fill="#a0a0a0">
        <text x="1742" y="891" font-size="28">XU-39</text>
        <text x="1688" y="910" font-size="23">Xard Universe</text>
      </g>
    </svg>`;
  }

  private wave() {
    const tips = [43, 225, 261, 389, 577, 752, 998, 1050, 1288, 1482];
    const dips = [219, 241, 285, 501, 661, 1016, 1122, 1457];
    const kinks = [...tips.map((x) => [x, 925]), ...dips.map((x) => [x, 946])].sort((a, b) => a[0] - b[0]);
    const base = `10,935 ${kinks.map(([x, y]) => `${x - 4},935 ${x},${y} ${x + 4},935`).join(" ")} 1514,935`;
    return html`<svg class="plot" viewBox="11 923 1841 25" preserveAspectRatio="xMinYMin slice" role="img" aria-label="Oscillator">
      ${WAVE_DOTS_TOP.map((x) => svg`<circle cx=${x} cy="925" r="3" fill="#696969"/>`)}
      ${WAVE_DOTS_BOTTOM.map((x) => svg`<circle cx=${x} cy="946" r="3" fill="#696969"/>`)}
      <polyline points=${base} fill="none" stroke="#696969" stroke-width="1.500"/>
      ${WAVE.map(([t, p]) => svg`<polyline points=${p} fill="none" stroke=${t === "b" ? "#1e90ff" : "#ee82ee"} stroke-width="2.500"/>`)}
      <polyline points=${WAVE.map(([, p]) => p).join(" ")} fill="none" stroke="#fff" stroke-dasharray="2 3"/>
      <path d="M386 935l3-8 3 8zM1286 935l3-8 3 8z" fill="#e01010"/>
      <path d="M238 935h6l-3 9zM930 935h6l-3 9zM1494 935h6l-3 6z" fill="#00e5ee"/>
      <path d="M1762 947h20" stroke="#ee82ee" stroke-width="2"/>
    </svg>`;
  }

  render() {
    return html`
      <div class="stage">
        ${this.plot()}
        <section class="pairs">
          <div class="frames">${["M1", "M5", "M15", "M30", "H1", "H4", "D1", "W1", "MN1"].map((f) => html`<b>${f}</b>`)}</div>
          <div class="heads">${["PAIRS", "Bid", "PFO", "HiLo", "X"].map((f) => html`<span>${f}</span>`)}</div>
          <table>
            <colgroup><col class="c1" /><col class="c2" /><col class="c3" /><col class="c4" /><col class="c5" /></colgroup>
            <tbody>
              ${PAIRS.map(([name, bid, tick, pfo, tone, dir]) => html`<tr>
                <td>${name}</td><td class=${tone}>${bid}</td><td class=${tone}>${tick}</td><td class="gray">${pfo}</td>
                <td><div class="swatch ${dir}"></div></td>
              </tr>`)}
            </tbody>
          </table>
        </section>
        <div class="stats">
          <div class="daily">Daily Open</div>
          <div class="open">0.0000</div>
          <div class="stat w"><span>P2Op</span><i class="cy">0</i></div>
          <div class="stat"><span>HiLo</span><i>0</i></div>
          <div class="stat w"><span>ADR</span><i class="gr">0</i></div>
          <div class="pct">0%</div>
          <div class="big">OpenPips</div><div class="lcd">0.00</div>
          <div class="big">OpenPos</div><div class="lcd s">0.00%</div>
          <div class="big">Daily P/L</div><div class="lcd s">0.00%</div>
        </div>
        <div class="watch">
          <div class="row"><span>06.06.2022</span><span>18:55:00</span></div>
          <div>Monday</div>
          <div class="keys"><button class="key">|&lt;</button><button class="key">News</button><button class="key">Obj.</button><button class="key">&gt;|</button></div>
          <div class="quad"><button class="key">1</button><button class="key on">2</button><button class="key">3</button><button class="key">4</button></div>
        </div>
        <button class="trade buy">BUY</button>
        <button class="trade sell">SELL</button>
        <button class="trade close">CLOSE</button>
        <button class="trade all">CLOSEALL</button>
        <button class="on-btn">ON</button>
        <div class="badge">ADR W</div>
        <div class="tip">XU v39-XARD UNIVERSE<br />Time: 2022.06.06 15:06<br />Value1: 33235.289</div>
      </div>
      <div class="prices">${PRICES.map((p) => html`<span class="price">${p}</span>`)}<span class="now">32905.199</span></div>
      <div class="wave">${this.wave()}</div>
      <div class="levels"><span>1.20</span><span>0.00</span><span>-1.2</span></div>
      <div class="times"><span class="time">6 Jun 2022</span>${TIMES.map((t) => html`<span class="time">${t}</span>`)}</div>
    `;
  }
}

@customElement("task-bar")
export class TaskBar extends LitElement {
  static styles = css`
    :host { display: flex; height: 60px; flex: none; background: linear-gradient(#2b383e, #1f2c31); color: #fff; font-family: "Open Sans", "Noto Sans", sans-serif; position: relative; overflow: hidden; }
    button { border: 0; background: none; padding: 0; color: inherit; font: inherit; display: grid; place-items: center; }
    .start { width: 73px; }
    .search { display: flex; align-items: center; gap: 18px; width: 515px; box-sizing: border-box; background: #f1f1f1; border: 2px solid #bdbdbd; padding: 0 16px 0 15px; }
    .search input { flex: 1; min-width: 0; border: 0; background: none; outline: none; font: 21px "Open Sans", "Noto Sans", sans-serif; color: #333; padding: 3px 0 0; }
    .search input::placeholder { color: #333; opacity: 1; }
    .view { width: 75px; }
    .app { width: 75px; position: relative; }
    .app::after { content: ""; position: absolute; left: 7px; right: 7px; bottom: 0; height: 3px; background: #b08d57; }
    .app.active { background: #56636a; width: 72px; margin: 0 2px 0 1px; }
    .app.active::after { left: 0; right: 0; }
    .tray { margin-left: auto; display: flex; align-items: center; font-size: 20px; padding-right: 7px; }
    .weather { display: flex; align-items: center; gap: 12px; margin-right: 26px; white-space: pre; }
    .glyphs { display: flex; align-items: center; gap: 16px; }
    .when { width: 132px; text-align: center; font-size: 17px; line-height: 27px; }
    .bell { width: 44px; height: 60px; }
    .edge { border-left: 1px solid #76838a; height: 60px; margin-left: 13px; }
    svg { display: block; }
  `;

  render() {
    return html`
      <button class="start" aria-label="Start"><svg width="24" height="26" viewBox="0 0 24 26"><path d="M0 4l10-2v10H0zM11 2l13-2v12H11zM0 13h10v10L0 21.500zM11 13h13v13l-13-2.500z" fill="#fff"/></svg></button>
      <label class="search">
        <svg width="24" height="26" viewBox="0 0 24 26" aria-hidden="true"><circle cx="15" cy="9" r="7.500" fill="none" stroke="#111" stroke-width="2"/><path d="M10 15L1 25" stroke="#111" stroke-width="2"/></svg>
        <input type="text" placeholder="Type here to search" aria-label="Search" />
        <svg width="90" height="54" viewBox="0 0 90 54" aria-hidden="true">
          <path d="M28 20l18 24M38 20l10 24M18 34l30 12M62 52c0-22 6-32 16-40M64 38c6-4 8-10 8-16" fill="none" stroke="#3d9a3a" stroke-width="2"/>
          <path d="M34 32l12 6 12 14-10 1z" fill="#4fa536"/><path d="M44 42l8-5 3 6-7 5z" fill="#e9d9a4"/>
          <g fill="#fdb79d" stroke="#f59d84" stroke-width=".6">${[[20, 10], [28, 6], [39, 6], [36, 15], [24, 19], [15, 25], [22, 29], [32, 25], [42, 17], [28, 14], [6, 44], [12, 40], [5, 38], [80, 7], [73, 11], [77, 13]].map(([x, y]) => svg`<ellipse cx=${x} cy=${y} rx="5.500" ry="5"/>`)}</g>
          <g fill="#f58c79">${[[22, 11], [38, 8], [34, 19], [17, 27], [26, 24], [8, 41], [76, 9]].map(([x, y]) => svg`<circle cx=${x} cy=${y} r="2"/>`)}</g>
        </svg>
      </label>
      <button class="view" aria-label="Task view"><svg width="26" height="24" viewBox="0 0 26 24" fill="none" stroke="#e8e8e8" stroke-width="1.500"><path d="M1 0v3h15V0M1 24v-4h15v4M1 7h15v9H1zM22 0v6M22 12v12"/><path d="M20 9h4" stroke-width="4"/></svg></button>
      <button class="app" aria-label="File Explorer"><svg width="34" height="28" viewBox="0 0 34 28"><path d="M1 1h12l3 4h-15z" fill="#d99a17"/><rect x="1" y="4" width="32" height="23" rx="1" fill="#fbd669"/><path d="M7 27V15h20v12h-5v-5H12v5z" fill="#3f9be8"/></svg></button>
      <button class="app" aria-label="Chrome"><svg width="40" height="38" viewBox="0 0 40 38"><circle cx="19" cy="17" r="16" fill="#fbc116"/><path d="M19 17L5.200 9A16 16 0 0133 9.500z" fill="#e33b2e"/><path d="M19 17L5.200 9A16 16 0 0018 33l7-12z" fill="#2a9d4a"/><circle cx="19" cy="17" r="8" fill="#fff"/><circle cx="19" cy="17" r="6.300" fill="#2d7bea"/><circle cx="28" cy="26" r="10.500" fill="#c9cde6"/><path d="M26 18l6 10-4 4-5-4z" fill="#e5343b"/></svg></button>
      <button class="app" aria-label="Telegram, 45 unread"><svg width="40" height="38" viewBox="0 0 40 38"><circle cx="18" cy="17" r="16" fill="#2aa1dc"/><path d="M8 17l18-8-3 17-6-4-3 3-1-6z" fill="#fff"/><path d="M13 19l10-7-7 9z" fill="#b5dcf0"/><rect x="17" y="20" width="22" height="17" rx="8" fill="#7f8c92"/><text x="28" y="33" font-size="13" text-anchor="middle" fill="#fff">..45</text></svg></button>
      <button class="app active" aria-label="IC Markets"><svg width="36" height="36" viewBox="0 0 36 36"><rect width="36" height="36" fill="#000"/><path d="M8 18v-4M11.500 18V11M15 18V8" stroke="#fff" stroke-width="2.500"/><text x="17" y="18" font-size="14" font-weight="700" fill="#35c23a">IC</text><text x="18" y="28" font-size="7" font-weight="600" text-anchor="middle" fill="#fff">Markets</text></svg></button>
      <button class="app" aria-label="Forex Simulator"><svg width="36" height="36" viewBox="0 0 36 36"><rect width="36" height="36" fill="#fff"/><path d="M0 28q18 4 36-6v14H0z" fill="#35b9dd"/><path d="M0 32q18 2 36-4v8H0z" fill="#1686b8"/><text x="18" y="9" font-size="7" font-weight="700" text-anchor="middle" fill="#c22">soft4fx</text><text x="18" y="19" font-size="8" font-family="Liberation Serif" font-weight="700" text-anchor="middle" fill="#111">Forex</text><text x="18" y="26" font-size="8" font-family="Liberation Serif" font-weight="700" text-anchor="middle" fill="#111">Simulator</text></svg></button>
      <button class="app" aria-label="Paint"><svg width="36" height="36" viewBox="0 0 36 36"><path d="M16 6C4 7-1 19 4 27c4 7 10 2 12 4s6 4 11-1c6-7 7-14 2-19-4-4-8-5-13-5z" fill="#cfe4f5" stroke="#8fb3d1"/><circle cx="8" cy="19" r="3" fill="#d9433a"/><circle cx="12" cy="12" r="3" fill="#67b346"/><circle cx="19" cy="10" r="2.500" fill="#f4c542"/><circle cx="8" cy="26" r="2.500" fill="#3b7dd1"/><circle cx="15" cy="21" r="2.500" fill="#26323a"/><path d="M18 34l8-24 4 2z" fill="#e28c35"/><path d="M26 10c0-6 4-9 8-9 1 4-1 9-4 11z" fill="#b98455"/></svg></button>
      <div class="tray">
        <div class="weather"><svg width="36" height="34" viewBox="0 0 36 34"><path d="M22 1c10 5 13 17 5 25C19 35 5 34 1 26c8 3 15 0 19-6 4-6 4-12 2-19z" fill="#fdc42f"/></svg>10°C  Clear</div>
        <div class="glyphs">
          <svg width="18" height="10" viewBox="0 0 18 10" fill="none" stroke="#fff" stroke-width="1.500"><path d="M1 9l8-8 8 8"/></svg>
          <svg width="24" height="14" viewBox="0 0 24 14"><rect x="1" y="1" width="19" height="12" fill="none" stroke="#fff" stroke-width="1.500"/><rect x="3" y="3" width="8" height="8" fill="#fff"/><path d="M22 4v6" stroke="#fff" stroke-width="2"/></svg>
          <svg width="20" height="20" viewBox="0 0 20 20" fill="none" stroke="#ccc" stroke-width="1.500"><path d="M2 18C2 9 9 2 18 2M6 18c0-7 5-12 12-12M10 18c0-4 4-8 8-8"/><circle cx="16" cy="17" r="2" fill="#fff" stroke="none"/></svg>
          <svg width="22" height="18" viewBox="0 0 22 18" fill="none" stroke="#fff" stroke-width="1.500"><path d="M1 6h4l5-5v16l-5-5H1zM14 6l6 6M20 6l-6 6"/></svg>
        </div>
        <div class="when">23:44<br />19/09/2022</div>
        <button class="bell" aria-label="1 notification"><svg width="40" height="38" viewBox="0 0 40 38"><path d="M3 0h24v20h-8v6l-6-6H3z" fill="#fff"/><path d="M7 6h16M7 10h16M7 14h10" stroke="#26323a" stroke-width="1.500"/><circle cx="27" cy="25" r="11" fill="#2b3438" stroke="#999" stroke-width="1.500"/><text x="27" y="31" font-size="17" font-weight="600" text-anchor="middle" fill="#fff">1</text></svg></button>
        <span class="edge"></span>
      </div>
    `;
  }
}

@customElement("app-root")
export class AppRoot extends LitElement {
  static styles = css`
    :host { display: flex; flex-direction: column; height: 100vh; overflow: hidden; background: #f0f0f0; color: #000; font-family: "Open Sans", "Noto Sans", sans-serif; }
    button { font: inherit; color: inherit; background: none; border: 0; padding: 0; margin: 0; }
    svg { display: block; }
    .desk { flex: 1; min-height: 0; display: flex; }
    .behind { flex: 0 0 11px; display: flex; flex-direction: column; border-right: 1px solid #5a5a5a; box-sizing: border-box; background: linear-gradient(90deg, #c5d1e1, #d6dce4 60%, #b0b0b0); overflow: hidden; }
    .behind .a { height: 34px; background: #fbfbfb; padding-top: 9px; box-sizing: border-box; }
    .behind .b { height: 34px; background: #1979ca; }
    .behind .c { height: 140px; background: #f1f3f5; }
    .behind .d { flex: 1; }
    .behind .e { height: 60px; background: #16212c; margin-left: 5px; }
    .behind .f { height: 71px; background: #f4f4f4; }
    .window { flex: 1; min-width: 0; display: flex; flex-direction: column; overflow: hidden; }
    .title { display: flex; align-items: center; height: 45px; flex: none; box-sizing: border-box; border-top: 1px solid #6d6d6d; background: #fff; padding-left: 11px; font-size: 17px; white-space: nowrap; }
    .title .name { padding-left: 5px; flex: 1; }
    .title button { width: 70px; height: 44px; display: grid; place-items: center; box-sizing: border-box; }
    .title button:last-child { width: 59px; padding-left: 11px; }
    .menu { display: flex; align-items: center; gap: 1px; height: 31px; flex: none; padding-left: 4px; font-size: 17px; box-sizing: border-box; border-bottom: 1px solid #a0a0a0; }
    .menu > button { padding: 0 12px; height: 29px; }
    .menu > svg { margin-right: -2px; }
    .mdi { margin-left: auto; display: flex; gap: 1px; height: 28px; margin-right: -10px; }
    .mdi button { width: 28px; background: #fff; border: 1px solid #dcdcdc; display: grid; place-items: center; box-sizing: border-box; }
    .bar { display: flex; align-items: center; height: 40px; flex: none; box-sizing: border-box; }
    .bar.second { height: 39px; }
    .group { display: flex; align-items: center; height: 40px; border-right: 1px solid #a0a0a0; border-bottom: 1px solid #a0a0a0; box-sizing: border-box; font-size: 17px; }
    .group + .group { padding-left: 5px; padding-right: 4px; }
    .bar.second .group { border-bottom: 0; height: 39px; }
    .bar.second .group + .group { padding-left: 3px; padding-right: 2px; }
    .tool { width: 41px; height: 35px; display: grid; place-items: center; box-sizing: border-box; }
    .group + .group .tool { width: 40px; }
    .tool.pressed, .tf.pressed { background: #f9f9f9; border: 1px solid; border-color: #9a9a9a #fff #fff #9a9a9a; }
    .wide { display: flex; align-items: center; height: 35px; padding: 0 5px 0 8px; gap: 4px; white-space: nowrap; }
    .icon { width: 28px; height: 28px; font-family: "Liberation Sans", sans-serif; }
    .caret { width: 18px; height: 35px; display: grid; place-items: center; }
    .caret svg { width: 10px; height: 6px; }
    .sep { width: 1px; height: 37px; background: #a0a0a0; margin: 0 4px; }
    .bar.second .sep { margin: 0 3px; }
    .grip { width: 3px; height: 33px; margin: 0 1px 0 1px; background: repeating-linear-gradient(#8a8a8a 0 1px, transparent 1px 3px); }
    .tf { width: 41px; height: 35px; color: #b4b4b4; font-size: 14px; box-sizing: border-box; }
    .right { margin-left: auto; display: flex; gap: 18px; margin-right: -3px; }
    .tabs { display: flex; height: 32px; flex: none; font-size: 17px; color: #6d6d6d; padding-left: 2px; border-bottom: 1px solid #fff; box-sizing: border-box; white-space: nowrap; }
    .tab { height: 29px; padding: 2px 6px 0 0; border-right: 1px solid #8a8a8a; box-sizing: border-box; width: 217px; }
    .tab:first-child { width: 109px; border: 0; padding: 2px 0 0 4px; }
    .tab.active { background: #fff; color: #000; border: 1px solid #000; border-top: 0; }
    .turn { margin-left: auto; display: flex; gap: 24px; align-items: center; padding-right: 2px; }
    .status { display: flex; height: 22px; flex: none; font-size: 17px; overflow: hidden; white-space: nowrap; }
    .cell { border-left: 1px solid #a0a0a0; margin-top: 3px; padding-left: 5px; box-sizing: border-box; overflow: hidden; line-height: 30px; }
    .cell.help { border: 0; flex: 1; padding-left: 2px; }
    .w177 { width: 177px; } .w160 { width: 160px; } .w110 { width: 110px; } .w105 { width: 105px; } .w208 { width: 208px; }
    .link { display: flex; gap: 7px; }
  `;

  render() {
    return html`
      <div class="desk">
        <div class="behind"><i class="a"><svg width="10" height="18" viewBox="0 0 10 18"><path d="M10 1C4 2 0 8 1 17h9z" fill="#dbe9f5" stroke="#6b8ba4"/><circle cx="4" cy="11" r="1.500" fill="#d33"/><circle cx="8" cy="6" r="1.500" fill="#3a3"/></svg></i><i class="b"></i><i class="c"></i><i class="d"></i><i class="e"></i><i class="f"></i></div>
        <main class="window">
          <header class="title">
            <svg width="24" height="24" viewBox="0 0 24 24"><rect width="24" height="24" fill="#000"/><path d="M6 12v-3M8.500 12V7M11 12V5" stroke="#ddd" stroke-width="1.500"/><text x="11" y="12" font-size="9" font-weight="700" fill="#2eb934">IC</text><path d="M5 17h14" stroke="#888" stroke-width="2"/></svg>
            <span class="name">66332845: ICMarketsSC-Demo06 - Demo Account - Raw Trading Ltd - [!STD_DJI30,M1 (offline)]</span>
            <button aria-label="Minimize"><svg width="16" height="16"><path d="M0 8h16" stroke="#000"/></svg></button>
            <button aria-label="Maximize"><svg width="16" height="16"><rect x=".5" y=".5" width="14" height="14" fill="none" stroke="#000"/></svg></button>
            <button aria-label="Close"><svg width="16" height="16"><path d="M0 0l15 15M15 0L0 15" stroke="#000" stroke-width="1.200"/></svg></button>
          </header>
          <nav class="menu">
            <svg width="26" height="26" viewBox="0 0 26 26" fill="#eef5fd" stroke="#5b8fce" stroke-width="1.500"><path d="M2 2h19v15H2z"/><path d="M2 4h19" stroke-width="3" stroke-dasharray="2 1"/><path d="M7 10h17v14H7z"/><path d="M7 11h17" stroke-width="3"/><path d="M10 20l2-4 2 4 2-5 2 6" fill="none"/></svg>
            ${["File", "View", "Insert", "Charts", "Tools", "Window", "Help"].map((m) => html`<button>${m}</button>`)}
            <div class="mdi">
              <button aria-label="Minimize chart"><svg width="8" height="10"><path d="M0 8h7" stroke="#6f7c8a" stroke-width="2"/></svg></button>
              <button aria-label="Restore chart"><svg width="9" height="9" fill="none" stroke="#6f7c8a" stroke-width="1.500"><path d="M3 3V1h5v4H6M1 4h5v4H1z"/></svg></button>
              <button aria-label="Close chart"><svg width="8" height="8"><path d="M1 1l6 6M7 1L1 7" stroke="#6f7c8a" stroke-width="2"/></svg></button>
            </div>
          </nav>
          <div class="bar">
            <div class="group">
              ${grip}${tool("newChart", "New chart")}${caret("New chart options")}${tool("profiles", "Profiles")}${caret("Profile options")}${sep}
              ${tool("market", "Market watch")}${tool("target", "Data window")}${tool("folder", "Favorites")}${tool("navigator", "Navigator")}${tool("tester", "Strategy tester")}${sep}
              <button class="wide">${icon("order")}New Order</button>
              ${tool("book", "MetaEditor")}${tool("cloud", "Cloud")}${tool("signal", "Signals")}${tool("money", "Market")}${tool("expert", "Experts")}
              <button class="wide">${icon("auto")}AutoTrading</button>
            </div>
            <div class="group">
              ${grip}${tool("bars", "Bar chart")}${tool("candles", "Candlesticks")}${tool("line", "Line chart", "pressed")}${sep}
              ${tool("zoomIn", "Zoom in")}${tool("zoomOut", "Zoom out")}${tool("tile", "Tile windows")}${sep}
              ${tool("scroll", "Auto scroll", "pressed")}${tool("shift", "Chart shift", "pressed")}${sep}
              ${tool("indicators", "Indicators")}${caret("Indicator options")}${tool("clock", "Periods")}${caret("Period options")}${tool("template", "Templates")}${caret("Template options")}
            </div>
            <div class="right">
              <button aria-label="Search"><svg width="22" height="24" viewBox="0 0 22 24" fill="none"><circle cx="13" cy="8" r="6" stroke="#3568c0" stroke-width="2.500"/><path d="M9 13l-7 7" stroke="#3568c0" stroke-width="4"/></svg></button>
              <button aria-label="1 message"><svg width="36" height="34" viewBox="0 0 36 34"><path d="M2 22c0-5 5-8 11-8s11 3 11 8-6 7-11 7l-6 4 1-5c-4-1-6-3-6-6z" fill="#f4f4f6" stroke="#999" stroke-width="1.500"/><circle cx="23" cy="15" r="13" fill="#e03a24"/><text x="23" y="22" font-size="19" text-anchor="middle" fill="#fff">1</text></svg></button>
            </div>
          </div>
          <div class="bar second">
            <div class="group">
              ${grip}${tool("cursor", "Cursor", "pressed")}${tool("cross", "Crosshair")}${sep}
              ${tool("vline", "Vertical line")}${tool("hline", "Horizontal line")}${tool("trend", "Trendline")}${tool("channel", "Equidistant channel")}${tool("fibo", "Fibonacci")}${tool("text", "Text")}${tool("label", "Text label")}${tool("arrows", "Arrows")}${caret("Arrow options")}
            </div>
            <div class="group">
              ${grip}${["M1", "M5", "M15", "M30", "H1", "H4", "D1", "W1", "MN"].map((t, i) => html`<button class="tf ${i === 0 ? "pressed" : ""}">${t}</button>`)}
            </div>
          </div>
          <trade-chart></trade-chart>
          <div class="tabs">
            ${["JP225,H1", "!STD_DJI30,M1 (offline)", "!STD_DJI30,M5 (offline)", "!STD_DJI30,M5 (offline)", "!STD_DJI30,M15 (offline)"].map((t, i) => html`<button class="tab ${i === 1 ? "active" : ""}">${t}</button>`)}
            <div class="turn"><svg width="6" height="10"><path d="M6 0v10L0 5z" fill="#888"/></svg><svg width="6" height="10"><path d="M0 0v10l6-5z" fill="#888"/></svg></div>
          </div>
          <footer class="status">
            <span class="cell help">For Help, press F1</span>
            <span class="cell w177">Default</span>
            <span class="cell w160">2022.06.06 15:06</span>
            <span class="cell w110">O: 33209.749</span>
            <span class="cell w110">H: 33217.779</span>
            <span class="cell w105">L: 33201.757</span>
            <span class="cell w105">C: 33201.757</span>
            <span class="cell w105">V: 275</span>
            <span class="cell w208 link"><svg width="38" height="22" viewBox="0 0 38 22"><path d="M1.500 4v18M5.500 4v16M9.500 4v14M13.500 4v13M17.500 4v11M21.500 4v9M25.500 4v8M29.500 4v6M33.500 4v5M37 4v3" stroke="#6a8a1c" stroke-width="2.500"/><path d="M9.500 20v2M13.500 18v4M17.500 17v5M21.500 15v7M25.500 13v9M29.500 11v11M33.500 10v12M37 8v14" stroke="#1c4e74" stroke-width="2.500"/></svg>252/1 kb</span>
          </footer>
        </main>
      </div>
      <task-bar></task-bar>
    `;
  }
}
